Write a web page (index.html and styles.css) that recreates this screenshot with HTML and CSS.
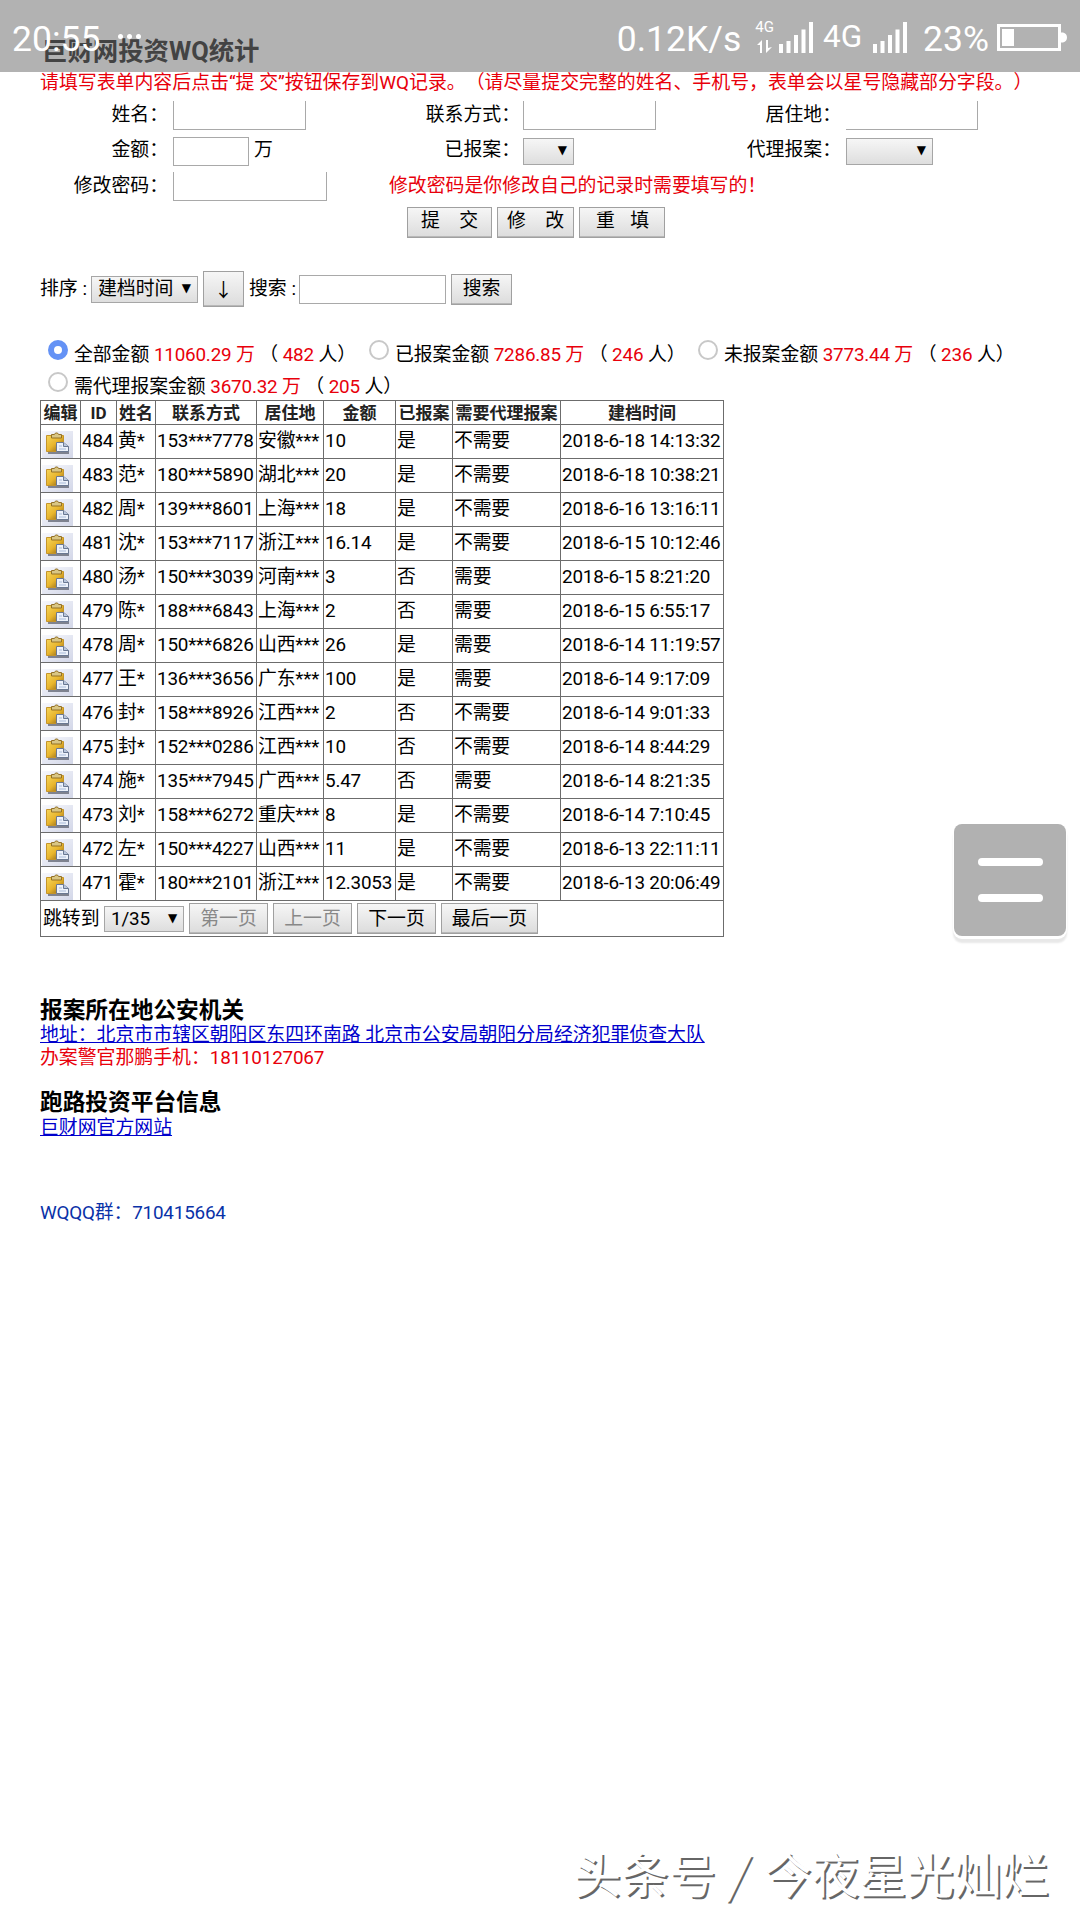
FILE: index.html
```html
<!DOCTYPE html>
<html lang="zh-CN">
<head>
  <meta charset="UTF-8">
  <title>巨财网投资WQ统计</title>
  <link rel="stylesheet" href="styles.css">
</head>
<body>
  <div class="statusbar">
    <span class="clock">20:55</span>
    <span class="dots"><i></i><i></i><i></i></span>
    <span class="speed">0.12K/s</span>
    <span class="net"><b>4G</b>
      <svg width="15" height="14" viewBox="0 0 15 14"><path d="M0 5L5 0V13H3V5zM9 0H11V8L15 7L9 13z" fill="#fff"/></svg>
    </span>
    <svg class="signal" width="34" height="31" viewBox="0 0 34 31"><path d="M0 22h4v9H0zM7.500 19h4v12h-4zM15 13h4v18h-4zM22.500 7.500h4V31h-4zM30 0h4v31h-4z" fill="#fff"/></svg>
    <span class="type">4G</span>
    <svg class="signal signal2" width="34" height="31" viewBox="0 0 34 31"><path d="M0 22h4v9H0zM7.500 19h4v12h-4zM15 13h4v18h-4zM22.500 7.500h4V31h-4zM30 0h4v31h-4z" fill="#fff"/></svg>
    <span class="percent">23%</span>
    <svg class="battery" width="70" height="27" viewBox="0 0 70 27"><path d="M1.500 1.500h61v24h-61z" fill="none" stroke="#fff" stroke-width="3"/><path d="M5 5h12v17H5zM64 8.500h2q4 1 4 5t-4 5h-2z" fill="#fff"/></svg>
  </div>

  <h1>巨财网投资WQ统计</h1>
  <p class="tip">请填写表单内容后点击“提 交”按钮保存到WQ记录。（请尽量提交完整的姓名、手机号，表单会以星号隐藏部分字段。）</p>

  <form class="form">
    <div class="row">
      <label>姓名：</label>
      <div class="field"><input class="cut" type="text"></div>
      <label>联系方式：</label>
      <div class="field"><input class="cut" type="text"></div>
      <label>居住地：</label>
      <div class="field"><input class="cut noleft" type="text"></div>
    </div>
    <div class="row">
      <label>金额：</label>
      <div class="field"><input class="money" type="text">万</div>
      <label>已报案：</label>
      <div class="field"><span class="select yes"></span></div>
      <label>代理报案：</label>
      <div class="field"><span class="select agent"></span></div>
    </div>
    <div class="row">
      <label>修改密码：</label>
      <div class="field"><input class="cut pass" type="text"></div>
      <span class="red note">修改密码是你修改自己的记录时需要填写的！</span>
    </div>
    <div class="buttons">
      <button type="button" class="b1"><span>提</span><span>交</span></button>
      <button type="button" class="b2"><span>修</span><span>改</span></button>
      <button type="button" class="b3"><span>重</span><span>填</span></button>
    </div>
  </form>

  <div class="toolbar">
    <span class="sortlabel">排序 :</span>
    <span class="select sort">建档时间</span>
    <button class="arrow">↓</button>
    <span class="searchlabel">搜索 :</span>
    <input class="search" type="text">
    <button class="go">搜索</button>
  </div>

  <div class="totals">
    <div class="line">
      <span class="opt first"><i class="radio on"></i>全部金额 <em>11060.29 万</em> （ <em>482</em> 人）</span>
      <span class="opt second"><i class="radio"></i>已报案金额 <em>7286.85 万</em> （ <em>246</em> 人）</span>
      <span class="opt"><i class="radio"></i>未报案金额 <em>3773.44 万</em> （ <em>236</em> 人）</span>
    </div>
    <div class="line">
      <span class="opt"><i class="radio"></i>需代理报案金额 <em>3670.32 万</em> （ <em>205</em> 人）</span>
    </div>
  </div>

  <table class="list">
    <colgroup>
      <col class="c1"><col class="c2"><col class="c3"><col class="c4"><col class="c5"><col class="c6"><col class="c7"><col class="c8"><col class="c9">
    </colgroup>
    <thead>
      <tr><th>编辑</th><th>ID</th><th>姓名</th><th>联系方式</th><th>居住地</th><th>金额</th><th>已报案</th><th>需要代理报案</th><th>建档时间</th></tr>
    </thead>
    <tbody id="rows"></tbody>
    <tfoot>
      <tr><td colspan="9">
        <div class="pager">
          <span class="jump">跳转到</span>
          <span class="select page">1/35</span>
          <button disabled>第一页</button>
          <button disabled>上一页</button>
          <button>下一页</button>
          <button class="last">最后一页</button>
        </div>
      </td></tr>
    </tfoot>
  </table>

  <div class="info">
    <h2>报案所在地公安机关</h2>
    <p><a href="#">地址：北京市市辖区朝阳区东四环南路 北京市公安局朝阳分局经济犯罪侦查大队</a></p>
    <p class="red">办案警官那鹏手机：<span class="num">18110127067</span></p>
    <h2 class="platform">跑路投资平台信息</h2>
    <p><a href="#">巨财网官方网站</a></p>
    <p class="qq">WQQQ群：710415664</p>
  </div>

  <div class="fab"><i></i><i></i></div>
  <div class="watermark">头条号 <span class="slash">/</span> 今夜星光灿烂</div>

  <svg width="0" height="0" class="defs">
    <defs>
      <linearGradient id="bg" x1="0" y1="0" x2="1" y2="1"><stop offset="0" stop-color="#f7f8fd"/><stop offset="1" stop-color="#d3d7e8"/></linearGradient>
      <linearGradient id="gold" x1="0" y1="0" x2="1" y2="1"><stop offset="0" stop-color="#f6d65c"/><stop offset=".5" stop-color="#e8b52c"/><stop offset="1" stop-color="#7d5614"/></linearGradient>
      <symbol id="paste" viewBox="0 0 31 27">
        <rect width="31" height="27" fill="url(#bg)"/>
        <path d="M6 20h21v3H6z" fill="#555a66" opacity=".7"/>
        <path d="M4.500 4.500h17v16h-17z" fill="url(#gold)" stroke="#c4942a"/>
        <path d="M9.500 7v-3.500h3l1-1.500h2l1 1.500h3V7z" fill="#d9c684" stroke="#937126"/>
        <path d="M14.500 11.500h7l5 4v5h-12z" fill="#edf2fb" stroke="#6a7892"/>
        <path d="M21.500 11.500v4h5" fill="#bac7de" stroke="#6a7892"/>
        <path d="M17 15h3M17 18h7" stroke="#a9bbd9"/>
      </symbol>
    </defs>
  </svg>

  <script>
    const rows = [
      [484, "黄*", "153***7778", "安徽***", "10", "是", "不需要", "2018-6-18 14:13:32"],
      [483, "范*", "180***5890", "湖北***", "20", "是", "不需要", "2018-6-18 10:38:21"],
      [482, "周*", "139***8601", "上海***", "18", "是", "不需要", "2018-6-16 13:16:11"],
      [481, "沈*", "153***7117", "浙江***", "16.14", "是", "不需要", "2018-6-15 10:12:46"],
      [480, "汤*", "150***3039", "河南***", "3", "否", "需要", "2018-6-15 8:21:20"],
      [479, "陈*", "188***6843", "上海***", "2", "否", "需要", "2018-6-15 6:55:17"],
      [478, "周*", "150***6826", "山西***", "26", "是", "需要", "2018-6-14 11:19:57"],
      [477, "王*", "136***3656", "广东***", "100", "是", "需要", "2018-6-14 9:17:09"],
      [476, "封*", "158***8926", "江西***", "2", "否", "不需要", "2018-6-14 9:01:33"],
      [475, "封*", "152***0286", "江西***", "10", "否", "不需要", "2018-6-14 8:44:29"],
      [474, "施*", "135***7945", "广西***", "5.47", "否", "需要", "2018-6-14 8:21:35"],
      [473, "刘*", "158***6272", "重庆***", "8", "是", "不需要", "2018-6-14 7:10:45"],
      [472, "左*", "150***4227", "山西***", "11", "是", "不需要", "2018-6-13 22:11:11"],
      [471, "霍*", "180***2101", "浙江***", "12.3053", "是", "不需要", "2018-6-13 20:06:49"]
    ];
    document.getElementById("rows").innerHTML = rows.map(r =>
      '<tr><td class="edit"><svg width="31" height="27"><use href="#paste"/></svg></td>' +
      r.map(c => "<td>" + c + "</td>").join("") + "</tr>"
    ).join("");
  </script>
</body>
</html>
```

FILE: styles.css
```css
* {
  box-sizing: border-box;
}
body {
  margin: 0;
  padding: 35px 0 0 40px;
  height: 1920px;
  overflow: hidden;
  position: relative;
  background: #fff;
  color: #000;
  font-family: Roboto, "Noto Sans CJK SC", sans-serif;
  font-size: 18.86px;
  line-height: 24px;
  text-spacing-trim: space-all;
  white-space: nowrap;
}
h1, h2, p {
  margin: 0;
}
i, em {
  font-style: normal;
}
em, .red, .tip {
  color: #e8000b;
}
em, .num {
  letter-spacing: -0.2px;
}

/* phone status bar, floats over the page */
.statusbar {
  position: absolute;
  left: 0;
  top: 0;
  width: 1080px;
  height: 72px;
  padding: 6px 13px 0 12px;
  display: flex;
  align-items: center;
  background: rgba(0, 0, 0, 0.3);
  color: #fff;
  font-size: 35.500px;
  line-height: 66px;
}
.dots {
  display: flex;
  gap: 4px;
  margin: -5px 0 0 18px;
}
.dots i {
  width: 5px;
  height: 5px;
  border-radius: 50%;
  background: #fff;
}
.speed {
  margin-left: auto;
}
.net {
  display: flex;
  flex-direction: column;
  align-items: center;
  gap: 6px;
  margin: -3px 5px 0 14px;
  font-size: 15px;
  line-height: 13px;
}
.net b {
  font-weight: 400;
}
.signal {
  margin: -4px 10px 0 0;
}
.signal2 {
  margin: -4px 16px 0 11px;
}
.type {
  margin-top: -4px;
  font-size: 31.500px;
}
.battery {
  margin: -3px 0 0 8px;
}

h1 {
  height: 35px;
  padding-left: 2px;
  font-size: 25.4px;
  line-height: 32px;
  color: #606060;
}
.tip {
  height: 31px;
  font-size: 18.9px;
  line-height: 26px;
}

/* form */
.row {
  display: grid;
  grid-template-columns: 128px 223px 129px 223px 98px 1fr;
  height: 35.500px;
}
.row label {
  padding-top: 1px;
  text-align: right;
  line-height: 26px;
}
.row:nth-child(2) {
  height: 35px;
}
.row:nth-child(2) label {
  padding-top: 0;
}
.field {
  display: flex;
  align-items: flex-start;
  padding-left: 5px;
  line-height: 26px;
}
.row label:nth-of-type(n + 2) + .field {
  padding-left: 3px;
}
.row label:nth-of-type(3) + .field {
  padding-left: 5px;
}
input {
  margin: 0;
  padding: 0 3px;
  border: 1px solid #a9a9a9;
  border-radius: 0;
  outline: none;
  background: #fff;
  font: inherit;
  width: 133px;
  height: 29px;
}
input.cut {
  border-top: none;
}
input.noleft {
  width: 132px;
  border-left: none;
}
input.money {
  width: 76px;
  margin-right: 5px;
}
input.pass {
  width: 154px;
}
.note {
  grid-column: 3 / 6;
  margin-left: -2px;
  padding-top: 1px;
  line-height: 26px;
}
.select {
  position: relative;
  display: inline-block;
  height: 27px;
  padding-left: 6px;
  line-height: 24px;
  border: 1px solid #a6a6a6;
  background: linear-gradient(#f6f6f6, #dedede);
}
.select::after {
  content: "▼";
  position: absolute;
  right: 6px;
  top: 0;
  font: 12px/22px "DejaVu Sans", sans-serif;
}
.yes {
  width: 51px;
  margin-top: 1px;
}
.agent {
  width: 87px;
  margin-top: 1px;
}
button {
  margin: 0;
  padding: 0;
  height: 31px;
  border: 1px solid #a0a0a0;
  box-shadow: inset 0 -1px #b8b8b8;
  background: linear-gradient(#f6f6f6, #dcdcdc);
  color: #000;
  font: inherit;
  line-height: 26px;
}
button[disabled] {
  color: #888;
}
.buttons {
  display: flex;
  gap: 5px;
  padding-left: 367px;
}
.buttons button {
  display: flex;
  justify-content: space-between;
}
.b1 {
  width: 85px;
  padding: 0 13px;
}
.b2 {
  width: 77px;
  padding: 0 9px;
}
.b3 {
  width: 86px;
  padding: 0 15px 0 16px;
}

/* sort and search */
.toolbar {
  display: flex;
  align-items: center;
  height: 36px;
  margin-top: 33px;
}
.sortlabel {
  width: 51px;
}
.sort {
  width: 107px;
  margin-right: 5px;
}
.arrow {
  width: 41px;
  height: 36px;
  margin-right: 5px;
  font-family: "Noto Sans CJK SC", sans-serif;
}
.searchlabel {
  width: 50px;
}
.search {
  width: 147px;
  margin-right: 5px;
}
.go {
  width: 61px;
}

/* totals */
.totals {
  margin-top: 35px;
  height: 58px;
}
.line {
  display: flex;
  height: 32px;
  line-height: 26px;
}
.opt {
  display: flex;
  white-space: pre;
  letter-spacing: -0.05px;
}
.first {
  width: 321px;
}
.second {
  width: 329px;
}
.radio {
  width: 20px;
  height: 20px;
  margin: -2px 6px 0 8px;
  border: 2px solid #c8c8c8;
  border-radius: 50%;
}
.radio.on {
  border: 6px solid #6492f5;
}

/* records */
.list {
  width: 684px;
  table-layout: fixed;
  border-collapse: collapse;
}
.c1 { width: 40px; }
.c2 { width: 36px; }
.c3 { width: 39px; }
.c4 { width: 101px; }
.c5 { width: 67px; }
.c6 { width: 72px; }
.c7 { width: 57px; }
.c8 { width: 108px; }
.c9 { width: 163px; }
.list th, .list td {
  border: 1px solid #6c6c6c;
  padding: 0 0 0 1px;
}
.list th {
  height: 24px;
  padding: 0;
  color: #222;
  font-size: 17px;
  line-height: 22px;
}
.list tbody td {
  height: 34px;
  line-height: 28px;
  padding-bottom: 2px;
  letter-spacing: -0.2px;
}
.list tbody .edit {
  padding: 5px 0 0 1px;
}
.edit svg {
  display: block;
}
.list tfoot td {
  height: 36px;
}
.pager {
  display: flex;
  align-items: center;
}
.jump {
  width: 62px;
  padding-left: 1px;
}
.page {
  width: 80px;
  height: 26px;
  margin-right: 5px;
  letter-spacing: -0.2px;
}
.pager button {
  width: 79px;
  margin-right: 5px;
}
.pager .last {
  width: 97px;
}

/* info */
.info {
  padding-top: 61px;
}
.info p {
  height: 23px;
  line-height: 23px;
}
h2 {
  font-size: 22.7px;
  line-height: 26px;
}
.platform {
  margin-top: 20px;
}
.info .platform + p {
  margin-top: 1px;
}
a {
  color: #0000cc;
}
.info .qq {
  margin-top: 62px;
  color: #0a32a8;
  letter-spacing: -0.2px;
}

/* floating menu button */
.fab {
  position: absolute;
  left: 954px;
  top: 824px;
  width: 112px;
  height: 112px;
  padding-top: 34px;
  border-radius: 8px;
  background: #b1b1b1;
  box-shadow: 0 2px 0 1px #fff, 0 6px 2px 1px #e8e8e8;
}
.fab i {
  display: block;
  width: 65px;
  height: 8px;
  margin: 0 auto 28px;
  border-radius: 4px;
  background: #fff;
}
.watermark {
  position: absolute;
  right: 31px;
  top: 1839px;
  color: #fff;
  font: 47.500px/68px "Noto Sans CJK SC", sans-serif;
  text-shadow: 2px 2px 0 #666;
}
.slash {
  display: inline-block;
  padding: 0 4px;
  transform: skewX(-10deg);
}
.defs {
  position: absolute;
}
```
